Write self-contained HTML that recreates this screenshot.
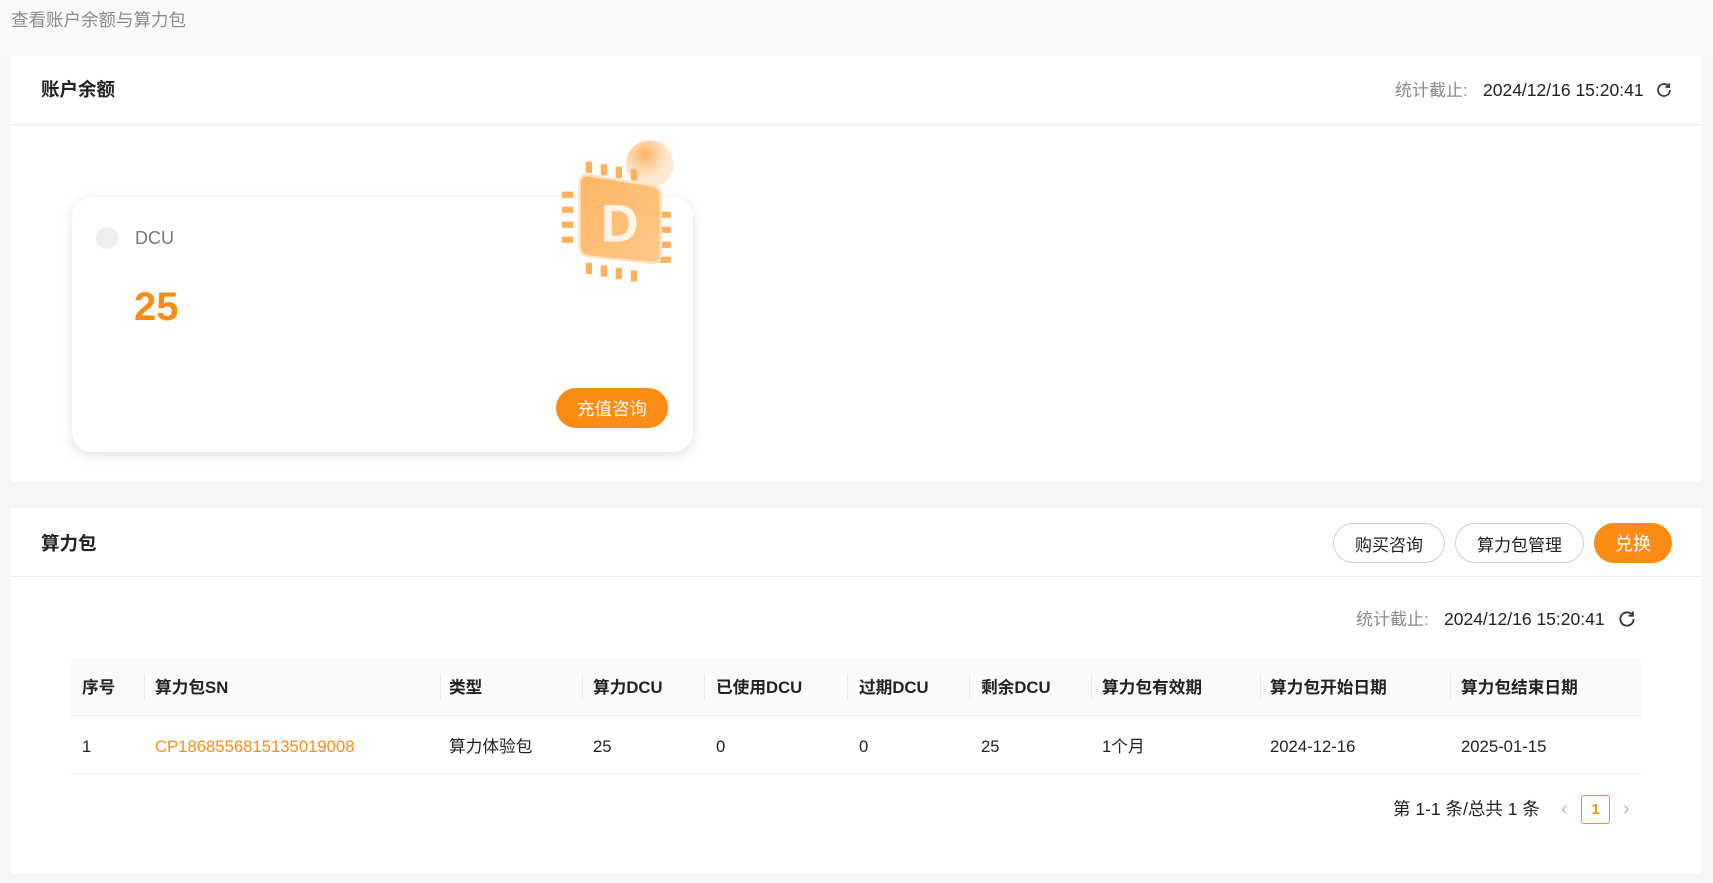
<!DOCTYPE html>
<html><head><meta charset="utf-8"><style>
*{margin:0;padding:0;box-sizing:border-box}
body{width:1713px;height:883px;background:#f5f5f5;font-family:"Liberation Sans","Noto Sans CJK SC",sans-serif;color:#222;position:relative;overflow:hidden}
.abs{position:absolute}
.top{left:0;top:0;width:1713px;height:56px;background:#fafafa}
.card{background:#fff;left:11px;width:1690px}
.t{font-size:16.7px;white-space:nowrap;line-height:1}
.btn{border:1px solid #d0d0d0;border-radius:20px;background:#fff;font-size:17px;display:flex;align-items:center;justify-content:center;color:#222}
.or{background:#fa8c16;border-color:#fa8c16;color:#fff}
</style></head><body>
<div class="abs top"></div>
<div class="abs t" style="left:11px;top:12px;color:#8a8a8a;font-size:17.5px">查看账户余额与算力包</div>

<div class="abs card" style="top:56px;height:426px">
  <div class="abs t" style="left:30px;top:25px;font-size:18.5px;font-weight:bold">账户余额</div>
  <div class="abs t" style="left:1384px;top:26px;color:#8a8a8a;font-size:17px">统计截止:</div>
  <div class="abs t" style="left:1472px;top:26px;font-size:17.5px">2024/12/16 15:20:41</div>
  <svg class="abs" style="left:1644px;top:25px" width="18" height="18" viewBox="0 0 24 24" fill="none" stroke="#333" stroke-width="2.2"><path d="M20 12a8 8 0 1 1-2.4-5.7"/><path d="M19 3v5h-5"/></svg>
  <div class="abs" style="left:0;top:68px;width:1690px;height:1px;background:#eee"></div>
</div>

<div class="abs" style="left:72px;top:197px;width:621px;height:255px;background:#fff;border-radius:20px;box-shadow:0 3px 12px rgba(0,0,0,.12)">
  <div class="abs" style="left:24px;top:30px;width:22px;height:22px;border-radius:50%;background:#eee"></div>
  <div class="abs t" style="left:63px;top:32px;font-size:18px;color:#777">DCU</div>
  <div class="abs t" style="left:62px;top:90px;font-size:40px;font-weight:bold;color:#fa8c16">25</div>
  <div class="abs btn or" style="left:484px;top:191px;width:112px;height:40px;font-size:17.5px">充值咨询</div>
</div>
<svg class="abs" style="left:562px;top:119px" width="150" height="169" viewBox="0 0 120 135">
  <defs><radialGradient id="g1" cx=".4" cy=".3"><stop offset="0" stop-color="#ffb060"/><stop offset="1" stop-color="#ffd8b0" stop-opacity=".6"/></radialGradient>
  <linearGradient id="g2" x1="0" y1="0" x2="1" y2="1"><stop offset="0" stop-color="#ffb563"/><stop offset="1" stop-color="#ffc98a"/></linearGradient></defs>
  <circle cx="70" cy="36" r="19" fill="url(#g1)"/>
  <g fill="#ffb05a">
   <rect x="19" y="34" width="5" height="9"/><rect x="31" y="36" width="5" height="9"/><rect x="43" y="38" width="5" height="9"/><rect x="55" y="40" width="5" height="9"/>
   <rect x="19" y="115" width="5" height="9"/><rect x="31" y="117" width="5" height="9"/><rect x="43" y="119" width="5" height="9"/><rect x="55" y="121" width="5" height="9"/>
   <rect x="0" y="58" width="9" height="5"/><rect x="0" y="70" width="9" height="5"/><rect x="0" y="82" width="9" height="5"/><rect x="0" y="94" width="9" height="5"/>
   <rect x="78" y="74" width="9" height="5"/><rect x="78" y="86" width="9" height="5"/><rect x="78" y="98" width="9" height="5"/><rect x="78" y="110" width="9" height="5"/>
  </g>
  <path d="M22 45 L72 53 Q79 55 79 62 L79 108 Q79 116 72 115 L22 110 Q14 109 14 101 L14 52 Q14 44 22 45Z" fill="url(#g2)" stroke="#ffe3c2" stroke-width="2"/>
  <text x="31" y="98" font-family="Liberation Sans" font-weight="bold" font-size="42" fill="#fff4e6">D</text>
</svg>

<div class="abs card" style="top:508px;height:366px">
  <div class="abs t" style="left:30px;top:27px;font-size:18.5px;font-weight:bold">算力包</div>
  <div class="abs btn" style="left:1322px;top:15px;width:112px;height:40px">购买咨询</div>
  <div class="abs btn" style="left:1444px;top:15px;width:129px;height:40px">算力包管理</div>
  <div class="abs btn or" style="left:1583px;top:15px;width:78px;height:40px;font-size:18px">兑换</div>
  <div class="abs" style="left:0;top:68px;width:1690px;height:1px;background:#eee"></div>
  <div class="abs t" style="left:1345px;top:103px;color:#8a8a8a;font-size:17px">统计截止:</div>
  <div class="abs t" style="left:1433px;top:103px;font-size:17.5px">2024/12/16 15:20:41</div>
  <svg class="abs" style="left:1606px;top:101px" width="20" height="20" viewBox="0 0 24 24" fill="none" stroke="#333" stroke-width="2.2"><path d="M20 12a8 8 0 1 1-2.4-5.7"/><path d="M19 3v5h-5"/></svg>
</div>

<div class="abs" style="left:71px;top:658px;width:1570px;height:58px;background:#fafafa;border-bottom:1px solid #eee"></div>
<div class="abs" style="left:71px;top:773px;width:1570px;height:1px;background:#eee"></div>
<div class="abs" style="left:144px;top:674px;width:1px;height:26px;background:#e8e8e8"></div>
<div class="abs" style="left:440px;top:674px;width:1px;height:26px;background:#e8e8e8"></div>
<div class="abs" style="left:582px;top:674px;width:1px;height:26px;background:#e8e8e8"></div>
<div class="abs" style="left:704px;top:674px;width:1px;height:26px;background:#e8e8e8"></div>
<div class="abs" style="left:847px;top:674px;width:1px;height:26px;background:#e8e8e8"></div>
<div class="abs" style="left:969px;top:674px;width:1px;height:26px;background:#e8e8e8"></div>
<div class="abs" style="left:1091px;top:674px;width:1px;height:26px;background:#e8e8e8"></div>
<div class="abs" style="left:1260px;top:674px;width:1px;height:26px;background:#e8e8e8"></div>
<div class="abs" style="left:1450px;top:674px;width:1px;height:26px;background:#e8e8e8"></div>

<div style="font-weight:bold">
<div class="abs t" style="left:82px;top:680px">序号</div>
<div class="abs t" style="left:155px;top:680px">算力包SN</div>
<div class="abs t" style="left:449px;top:680px">类型</div>
<div class="abs t" style="left:593px;top:680px">算力DCU</div>
<div class="abs t" style="left:716px;top:680px">已使用DCU</div>
<div class="abs t" style="left:859px;top:680px">过期DCU</div>
<div class="abs t" style="left:981px;top:680px">剩余DCU</div>
<div class="abs t" style="left:1102px;top:680px">算力包有效期</div>
<div class="abs t" style="left:1270px;top:680px">算力包开始日期</div>
<div class="abs t" style="left:1461px;top:680px">算力包结束日期</div>
</div>
<div class="abs t" style="left:82px;top:739px">1</div>
<div class="abs t" style="left:155px;top:739px;color:#fa8c16">CP1868556815135019008</div>
<div class="abs t" style="left:449px;top:739px">算力体验包</div>
<div class="abs t" style="left:593px;top:739px">25</div>
<div class="abs t" style="left:716px;top:739px">0</div>
<div class="abs t" style="left:859px;top:739px">0</div>
<div class="abs t" style="left:981px;top:739px">25</div>
<div class="abs t" style="left:1102px;top:739px">1个月</div>
<div class="abs t" style="left:1270px;top:739px">2024-12-16</div>
<div class="abs t" style="left:1461px;top:739px">2025-01-15</div>

<div class="abs t" style="left:1393px;top:801px;font-size:17.5px">第 1-1 条/总共 1 条</div>
<div class="abs t" style="left:1561px;top:799px;color:#bbb;font-size:20px">‹</div>
<div class="abs" style="left:1581px;top:795px;width:29px;height:29px;border:1px solid #fa8c16;border-radius:3px;color:#fa8c16;font-size:15px;font-weight:bold;display:flex;align-items:center;justify-content:center">1</div>
<div class="abs t" style="left:1623px;top:799px;color:#bbb;font-size:20px">›</div>
</body></html>
